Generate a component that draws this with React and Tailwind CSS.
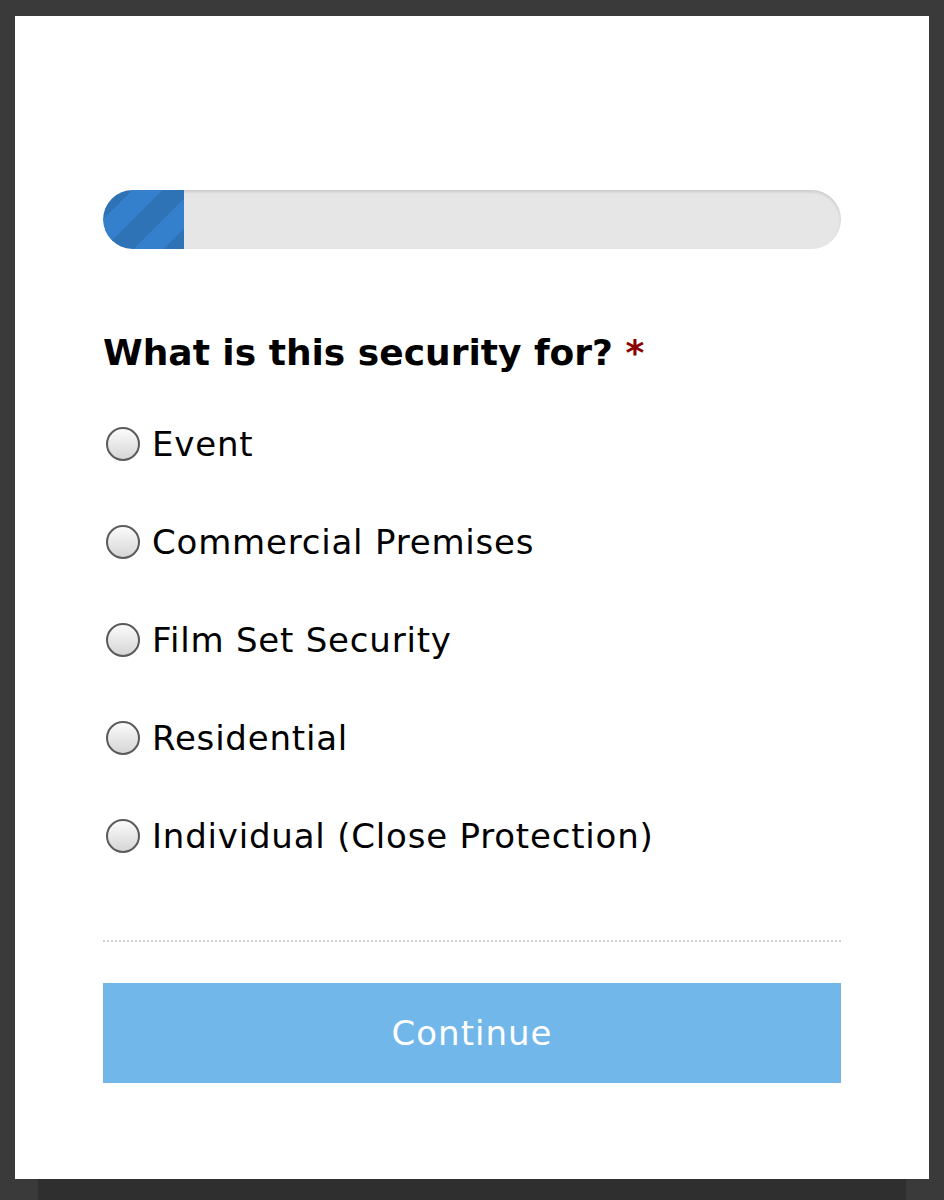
import React from 'react';

const options = [
  'Event',
  'Commercial Premises',
  'Film Set Security',
  'Residential',
  'Individual (Close Protection)',
];

const Radio = () => (
  <span className="ml-[3px] w-[34px] h-[34px] rounded-full border-2 border-[#5a5a5a] bg-gradient-to-b from-[#fbfbfb] to-[#d6d6d6] shrink-0" />
);

export default function App() {
  return (
    <div
      className="w-[944px] h-[1200px] bg-[#3a3a3a] overflow-hidden flex flex-col"
      style={{ fontFamily: '"DejaVu Sans", "Open Sans", sans-serif' }}
    >
      <div className="pt-[16px] px-[15px]">
        <div className="bg-white h-[1163px] px-[88px] pt-[174px]">
          {/* Progress bar */}
          <div className="h-[59px] rounded-full bg-[#e6e6e6] shadow-[inset_0_2px_3px_rgba(0,0,0,0.12)] overflow-hidden flex">
            <div
              className="w-[81px] h-full rounded-l-full rounded-r-[6px] bg-[#3480cc]"
              style={{
                backgroundImage:
                  'linear-gradient(135deg, rgba(0,0,0,0.1) 25%, transparent 25%, transparent 50%, rgba(0,0,0,0.1) 50%, rgba(0,0,0,0.1) 75%, transparent 75%, transparent)',
                backgroundSize: '60px 60px',
              }}
            />
          </div>

          {/* Question */}
          <h2 className="mt-[82px] text-[36px] font-bold text-black leading-[44px] tracking-[0px]">
            What is this security for? <span className="text-[#8b0000]">*</span>
          </h2>

          <div className="mt-[43px] flex flex-col">
            {options.map((o) => (
              <label key={o} className="flex items-center gap-[12px] h-[98px] first:h-[60px] first:-mt-[4px] first:mb-[19px] text-[34px] tracking-[0.8px] text-black">
                <Radio />
                <span>{o}</span>
              </label>
            ))}
          </div>

          <div className="mt-[55px] border-t-2 border-dotted border-[#cfcfcf]" />

          <button className="mt-[41px] w-full h-[100px] bg-[#72b7ea] text-white text-[34px] tracking-[1px]">
            Continue
          </button>
        </div>
      </div>
      <div className="flex-1 mx-[38px] bg-[#2f2f2f]" />
    </div>
  );
}
